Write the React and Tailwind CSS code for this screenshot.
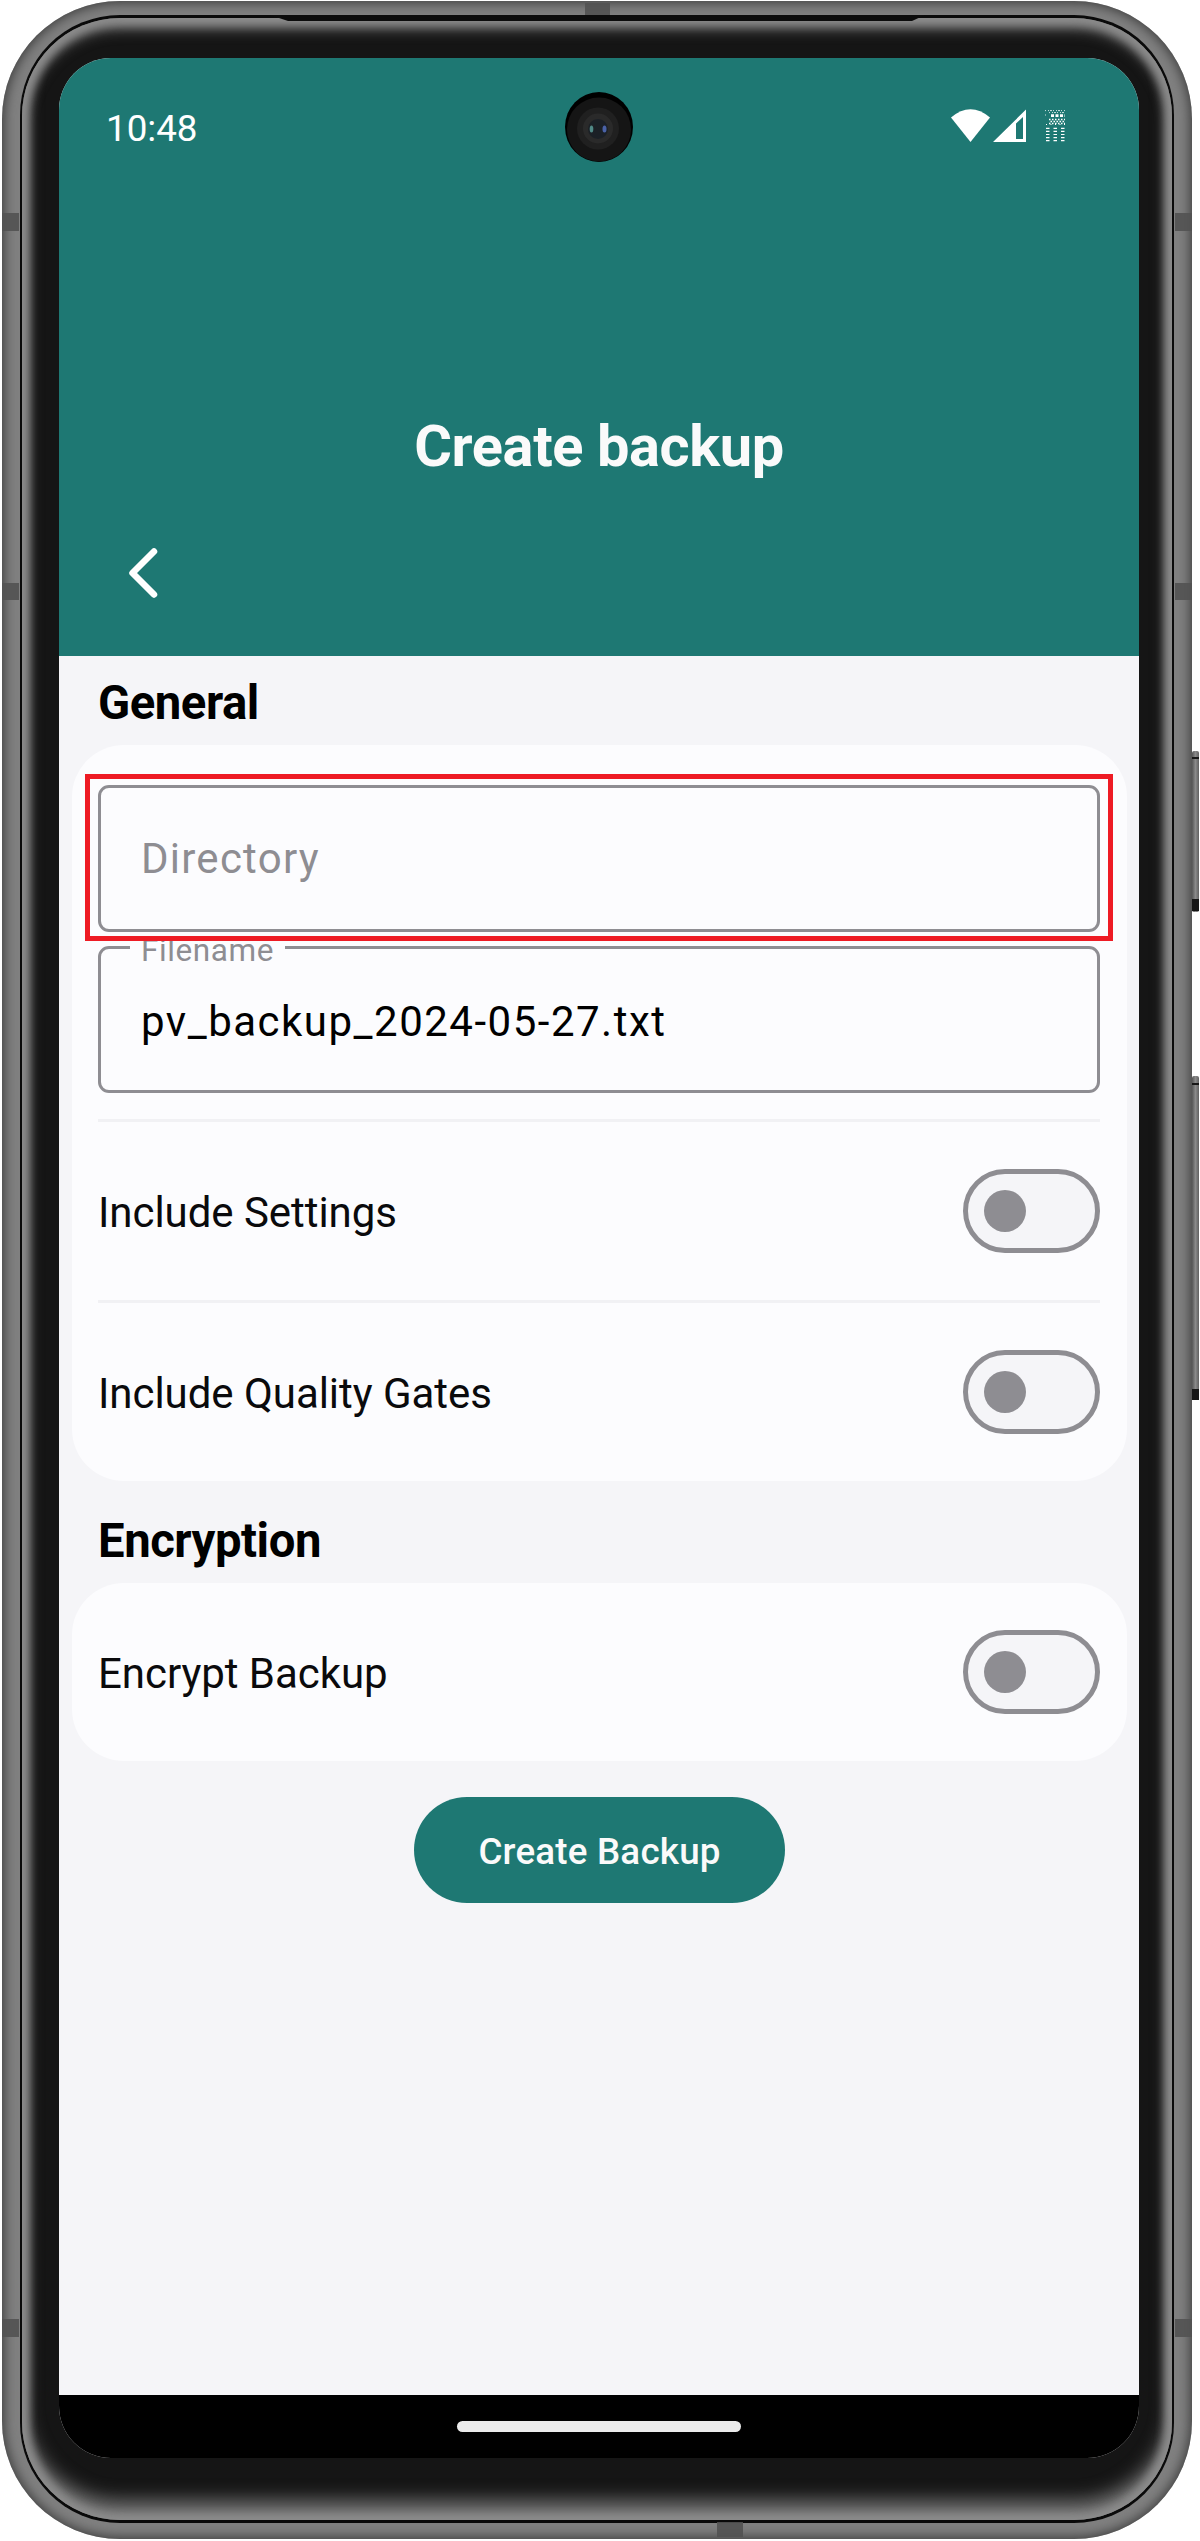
function Switch() {
  return (
    <div className="flex h-[84px] w-[137px] items-center rounded-full border-[5px] border-[#8e8d92] bg-[#f5f5f8] pl-4">
      <div className="size-[42px] rounded-full bg-[#8e8d92]" />
    </div>
  );
}

function Row({ label }) {
  return (
    <div className="flex h-[178px] items-center justify-between">
      <span className="pt-[3px] text-[42px] leading-none tracking-[-0.05px] text-[#0a0a0c]">{label}</span>
      <Switch />
    </div>
  );
}

function SectionTitle({ children, className }) {
  return (
    <h2 className={"flex items-center pl-[26px] text-[47.25px] font-bold tracking-[-0.45px] text-black " + className}>
      {children}
    </h2>
  );
}

function StatusIcons() {
  return (
    <svg className="h-[36px] w-[116px]" viewBox="950 108 116 36" fill="#fff">
      <path d="M951 117.500Q970.500 101 990 117.500L970.500 142Z" />
      <path fillRule="evenodd" d="M993 142L1026 109.500V142ZM1016 123.500V139H1023V117Z" />
      <g stroke="#fff" fill="none">
        <path strokeWidth="1" strokeDasharray="1 2 1 1 2 1" opacity=".8" d="M1045 110.600H1065M1049 112.600H1065M1045 115H1047" />
        <path strokeWidth="2.800" strokeDasharray="3 1.500" d="M1051 115.700H1065" />
        <path strokeWidth="1.300" strokeDasharray="1.500 1.500" d="M1049 119.500H1065M1050.500 121.500H1065M1049 123.500H1065" />
        <path strokeWidth="1" strokeDasharray="1 3.500" d="M1046 124.500H1065" />
        <path strokeWidth="1.200" strokeDasharray="3.500 4" d="M1046 128.300H1065M1046 131.400H1065M1046 134.500H1065M1046 137.600H1065M1046 140.700H1065" />
      </g>
    </svg>
  );
}

function Camera() {
  return (
    <svg className="absolute left-[565px] top-[92px] h-[70px] w-[68px]" viewBox="0 0 68 70">
      <ellipse cx="34" cy="35" rx="34" ry="35" fill="#000" />
      <ellipse cx="34" cy="37.500" rx="32" ry="32" fill="#151515" />
      <circle cx="33" cy="36.500" r="21" fill="#202020" />
      <circle cx="33" cy="36.500" r="15" fill="#2a2a2a" />
      <circle cx="33" cy="37" r="10" fill="#1b2026" />
      <ellipse cx="26.500" cy="37" rx="1.800" ry="3.500" fill="#518a88" />
      <ellipse cx="39.500" cy="37" rx="2" ry="3.500" fill="#4a62a8" />
    </svg>
  );
}

/* Side keys, antenna bands and the earpiece slot of the handset. */
function Hardware() {
  return (
    <svg className="pointer-events-none absolute inset-0 h-full w-full" viewBox="0 0 1200 2541">
      <defs>
        <linearGradient id="key" x1="0" x2="1" y1="0" y2="0">
          <stop offset="0" stopColor="#555" />
          <stop offset=".5" stopColor="#8a8a8a" />
          <stop offset="1" stopColor="#606060" />
        </linearGradient>
      </defs>
      <g>
        <rect x="1192" y="751" width="7" height="161" rx="2" fill="url(#key)" />
        <path d="M1192 757h7v2h-7zM1192 899h7v12h-7z" fill="#161616" />
        <rect x="1192" y="1076" width="7" height="324" rx="2" fill="url(#key)" />
        <path d="M1192 1083h7v2h-7zM1192 1389h7v11h-7z" fill="#161616" />
      </g>
      <g fill="#525252" opacity=".9">
        <path d="M585 3h25v13h-25zM717 2522h26v15h-26z" />
        <path d="M2 213h17v18h-17zM1175 213h17v18h-17z" />
        <path d="M2 583h17v17h-17zM1175 583h17v17h-17z" />
        <path d="M2 2319h17v18h-17zM1175 2319h17v18h-17z" />
      </g>
      <path d="M270 15H925L912 21H288Z" fill="#0c0c0c" />
    </svg>
  );
}

export default function App() {
  return (
    <div className="relative flex h-[2541px] w-[1200px] overflow-hidden bg-white pl-[2px] pt-px font-['Roboto',sans-serif]">
      <div className="h-[2538px] w-[1190px] rounded-[118px] bg-[#808080] px-[18px] py-[14px] shadow-[inset_0_0_12px_2px_#3c3c3c]">
        <div className="h-[2508px] w-[1154px] rounded-[100px] bg-[#0a0a0a] px-[2px] py-[3px]">
          <div className="h-[2502px] w-[1150px] rounded-[98px] bg-[#151515] pl-[37px] pt-[40px] shadow-[inset_0_0_8px_7px_#8c8c8c,inset_0_9px_14px_2px_#6c6c6c,inset_0_-18px_18px_2px_#707070]">
            <div className="flex h-[2400px] w-[1080px] flex-col overflow-hidden rounded-[52px] bg-[#f5f5f8]">
              <header className="flex h-[598px] flex-col bg-[#1e7873]">
                <div className="flex h-[138px] items-start justify-between pl-[47px] pr-[73px] pt-[50px]">
                  <span className="-mt-[1px] text-[36.75px] leading-[43px] text-white">10:48</span>
                  <StatusIcons />
                </div>
                <h1 className="mt-[216px] text-center text-[57.75px] font-bold leading-[68px] tracking-[-0.4px] text-[#fafafa]">Create backup</h1>
                <svg className="ml-[67px] mt-[66px] h-[54px] w-[34px]" viewBox="0 0 34 54" fill="none" stroke="#fff" strokeWidth="6.500" strokeLinecap="round" strokeLinejoin="round">
                  <path d="M28 5.500L6.500 27L28 48.500" />
                </svg>
              </header>
              <main className="flex flex-1 flex-col pl-[13px] pr-[12px]">
                <SectionTitle className="h-[89px] pt-[5px]">General</SectionTitle>
                <section className="flex h-[736px] flex-col rounded-[52px] bg-[#fcfcfe] pl-[26px] pr-[27px] pt-[29px]">
                  <div className="z-10 -mx-[13px] h-[167px] border-[5px] border-[#ee1b24] px-[8px] pt-[6px]">
                    <div className="flex h-[147px] items-center rounded-[11px] border-[3px] border-[#8e8d92] pl-[40px] text-[42px] tracking-[1.25px] text-[#8e8d92]">Directory</div>
                  </div>
                  <div className="relative mt-[5px] flex h-[147px] items-center rounded-[11px] border-[3px] border-[#8e8d92] pl-[40px] pt-[4px] text-[42px] tracking-[1.5px] text-black">
                    pv_backup_2024-05-27.txt
                    <span className="absolute -top-[17px] left-[29px] h-[36px] w-[155px] bg-[#fcfcfe] pl-[11px] text-[31.5px] leading-[38px] tracking-[0.6px] text-[#8e8d92]">Filename</span>
                  </div>
                  <div className="mt-[26px] h-[3px] bg-[#f1f1f4]" />
                  <Row label="Include Settings" />
                  <div className="h-[3px] bg-[#f1f1f4]" />
                  <Row label="Include Quality Gates" />
                </section>
                <SectionTitle className="h-[102px] pt-[19px]">Encryption</SectionTitle>
                <section className="rounded-[52px] bg-[#fcfcfe] pl-[26px] pr-[27px]">
                  <Row label="Encrypt Backup" />
                </section>
                <button className="mt-[36px] h-[106px] w-[371px] self-center rounded-full bg-[#1e7873] pt-[3px] text-[36.75px] font-medium tracking-[0.2px] text-[#fafafa]">Create Backup</button>
              </main>
              <footer className="flex h-[63px] justify-center bg-black pt-[26px]">
                <div className="h-[11px] w-[284px] rounded-full bg-[#ebebeb]" />
              </footer>
            </div>
          </div>
        </div>
      </div>
      <Hardware />
      <Camera />
    </div>
  );
}
